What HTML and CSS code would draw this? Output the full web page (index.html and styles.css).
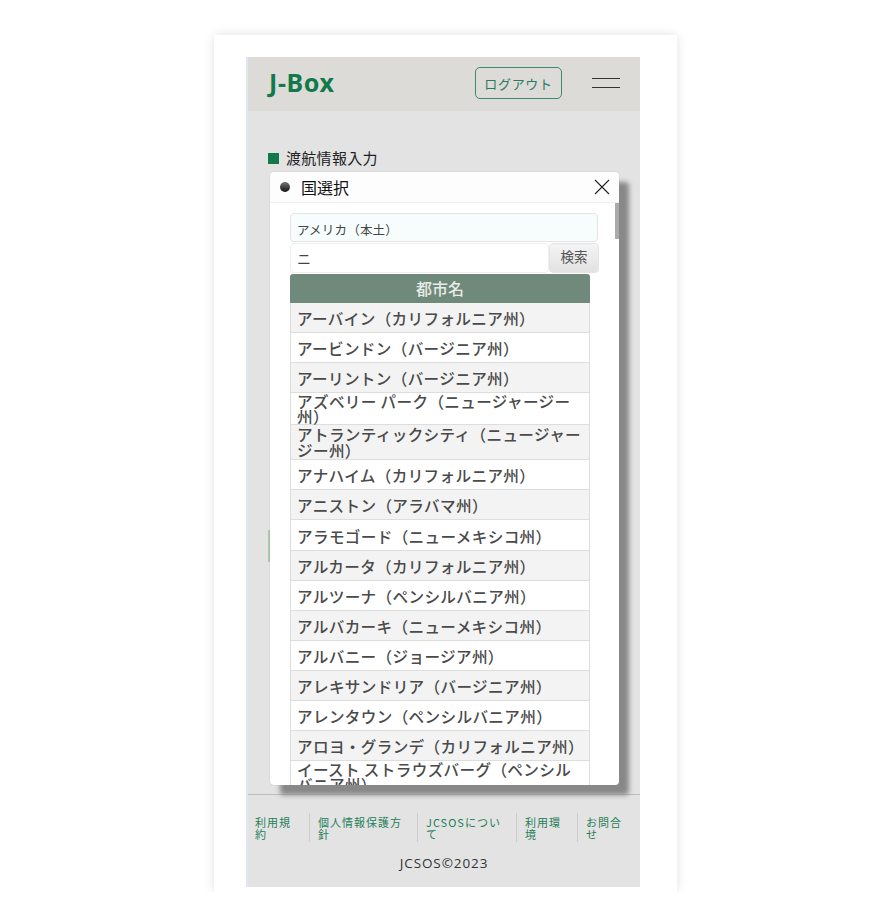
FILE: index.html
```html
<!DOCTYPE html>
<html lang="ja">
<head>
    <meta charset="UTF-8">
    <title>J-Box</title>
    <link rel="stylesheet" href="styles.css">
</head>
<body>

    <div class="sheet">
        <div class="phone">
            <!-- Header -->
            <header class="top-bar">
                <span class="logo">J-Box</span>
                <span class="logout-btn">ログアウト</span>
                <span class="menu-icon"><i></i><i></i></span>
            </header>

            <!-- Page behind the modal -->
            <main class="content">
                <h2 class="section-title">渡航情報入力</h2>
                <div class="hidden-field"></div>
            </main>

            <!-- Footer -->
            <footer class="site-footer">
                <nav class="footer-links">
                    <a class="link-1">利用規約</a>
                    <a class="link-2">個人情報保護方針</a>
                    <a class="link-3">JCSOSについて</a>
                    <a class="link-4">利用環境</a>
                    <a class="link-5">お問合せ</a>
                </nav>
                <p class="copyright">JCSOS©2023</p>
            </footer>

            <!-- Country select modal -->
            <div class="modal">
                <div class="modal-head">
                    <span class="modal-dot"></span>
                    <span class="modal-title">国選択</span>
                    <svg class="modal-close" width="18" height="18" viewBox="0 0 18 18">
                        <path d="M2 2 L16 16 M16 2 L2 16" stroke="#222" stroke-width="1.1" fill="none"/>
                    </svg>
                </div>
                <div class="modal-body">
                    <div class="scroll-thumb"></div>
                    <div class="country-box">アメリカ（本土）</div>
                    <div class="search-row">
                        <div class="search-input">ニ</div>
                        <div class="search-btn">検索</div>
                    </div>
                    <div class="city-table">
                        <div class="city-head">都市名</div>
                        <div class="city-row">アーバイン（カリフォルニア州）</div>
                        <div class="city-row">アービンドン（バージニア州）</div>
                        <div class="city-row">アーリントン（バージニア州）</div>
                        <div class="city-row wrap">アズベリー パーク（ニュージャージー州）</div>
                        <div class="city-row wrap tall">アトランティックシティ（ニュージャージー州）</div>
                        <div class="city-row">アナハイム（カリフォルニア州）</div>
                        <div class="city-row">アニストン（アラバマ州）</div>
                        <div class="city-row">アラモゴード（ニューメキシコ州）</div>
                        <div class="city-row">アルカータ（カリフォルニア州）</div>
                        <div class="city-row">アルツーナ（ペンシルバニア州）</div>
                        <div class="city-row">アルバカーキ（ニューメキシコ州）</div>
                        <div class="city-row">アルバニー（ジョージア州）</div>
                        <div class="city-row">アレキサンドリア（バージニア州）</div>
                        <div class="city-row">アレンタウン（ペンシルバニア州）</div>
                        <div class="city-row">アロヨ・グランデ（カリフォルニア州）</div>
                        <div class="city-row wrap">イースト ストラウズバーグ（ペンシルバニア州）</div>
                    </div>
                </div>
            </div>
        </div>
    </div>

</body>
</html>
```

FILE: styles.css
```css
body {
    font-family: "Noto Sans CJK JP", "Noto Sans", sans-serif;
    margin: 0;
    padding: 0;
    background-color: #fff;
}

.sheet {
    width: 431px;
    height: 835px;
    margin: 35px 0 0 214px;
    padding: 22px 0 0 32px;
    background: #fff;
    box-shadow: 0 0 10px rgba(0, 0, 0, 0.12);
}

.phone {
    position: relative;
    width: 392px;
    height: 830px;
    display: flex;
    flex-direction: column;
    background: #e3e3e3;
    border-left: 2px solid #e2e6f2;
}

/* Header */
.top-bar {
    height: 54px;
    box-sizing: border-box;
    display: flex;
    align-items: center;
    padding: 0 20px 2px 21px;
    background: #dcdbd8;
}

.logo {
    font-family: "Noto Sans", sans-serif;
    font-size: 25px;
    font-weight: 700;
    letter-spacing: 0.6px;
    padding-bottom: 3px;
    color: #12794a;
    margin-right: auto;
}

.logout-btn {
    width: 85px;
    height: 30px;
    display: flex;
    align-items: center;
    justify-content: center;
    border: 1px solid #3c8b70;
    border-radius: 5px;
    font-size: 13px;
    letter-spacing: 0.7px;
    color: #2b7a5e;
}

.menu-icon {
    margin-left: 30px;
    display: flex;
    flex-direction: column;
    gap: 8px;
}

.menu-icon i {
    display: block;
    width: 28px;
    height: 1px;
    background: #333;
}

/* Content behind modal */
.content {
    flex: 1;
    padding: 37px 0 0 20px;
}

.section-title {
    margin: 0;
    display: flex;
    align-items: center;
    font-size: 15px;
    font-weight: 400;
    line-height: 20px;
    letter-spacing: 0.3px;
    color: #222;
}

.section-title::before {
    content: "";
    width: 11px;
    height: 11px;
    margin-right: 7px;
    background: #12794a;
}

.hidden-field {
    width: 3px;
    height: 32px;
    margin-top: 362px;
    background: #a9c9a8;
}

/* Footer */
.site-footer {
    height: 93px;
    border-top: 1px solid #bbb;
    box-sizing: border-box;
}

.footer-links {
    display: flex;
    gap: 8px;
    margin-top: 18px;
    padding-left: 7px;
}

.footer-links a {
    flex: none;
    height: 29px;
    box-sizing: border-box;
    padding-top: 3px;
    font-size: 11px;
    line-height: 12px;
    letter-spacing: 1px;
    color: #1e8058;
    border-right: 1px solid #ccc;
}

.footer-links .link-1 { width: 55px; padding-right: 15px; }
.footer-links .link-2 { width: 100px; padding-right: 12px; }
.footer-links .link-3 { width: 91px; padding-right: 12px; }
.footer-links .link-4 { width: 53px; padding-right: 13px; }
.footer-links .link-5 { width: 44px; border-right: none; }

.copyright {
    margin: 12px 0 0;
    text-align: center;
    font-family: "Open Sans", sans-serif;
    font-size: 13.5px;
    letter-spacing: 0.9px;
    color: #333;
}

/* Modal */
.modal {
    position: absolute;
    left: 22px;
    top: 115px;
    width: 349px;
    height: 613px;
    background: #fff;
    border-radius: 4px;
    overflow: hidden;
    box-shadow: 10px 10px 5px #888, 0 0 1px rgba(0, 0, 0, 0.3);
}

.modal-head {
    height: 31px;
    display: flex;
    align-items: center;
    padding: 0 8px 0 10px;
    background: #fdfdfd;
    border-bottom: 1px solid #eee;
    box-sizing: border-box;
}

.modal-dot {
    width: 10px;
    height: 10px;
    border-radius: 50%;
    background: linear-gradient(#777, #111);
    margin-right: 11px;
}

.modal-title {
    font-size: 16px;
    color: #111;
    margin-right: auto;
}

.modal-body {
    position: relative;
    padding: 10px 20px 0;
}

.scroll-thumb {
    position: absolute;
    right: 0;
    top: 0;
    width: 4px;
    height: 36px;
    background: #aaa;
}

.country-box {
    width: 308px;
    height: 29px;
    box-sizing: border-box;
    padding: 3px 6px 0;
    display: flex;
    align-items: center;
    font-size: 12.5px;
    letter-spacing: 0.2px;
    color: #444;
    background: #f7fdfd;
    border: 1px solid #e4e4e4;
    border-radius: 4px;
}

.search-row {
    display: flex;
    height: 30px;
    margin-top: 1px;
    width: 309px;
}

.search-input {
    flex: 1;
    display: flex;
    align-items: center;
    padding: 0 6px;
    font-size: 14px;
    color: #444;
    border: 1px solid #eee;
    border-radius: 4px;
}

.search-btn {
    width: 50px;
    box-sizing: border-box;
    padding-bottom: 4px;
    display: flex;
    align-items: center;
    justify-content: center;
    font-size: 13.5px;
    color: #555;
    background: linear-gradient(#f4f4f4, #e2e2e2);
    border-radius: 4px;
    border: 1px solid #e4e4e4;
}

.city-table {
    width: 300px;
    margin-top: 1px;
}

.city-head {
    height: 29px;
    line-height: 28px;
    text-align: center;
    font-size: 16px;
    font-weight: 500;
    color: #e6ece8;
    background: #6f8a7a;
    border-radius: 3px 3px 0 0;
}

.city-row {
    height: 30.1px;
    box-sizing: border-box;
    padding: 1px 2px 0 6px;
    display: flex;
    align-items: center;
    font-size: 15.6px;
    font-weight: 500;
    line-height: 16px;
    letter-spacing: 0.35px;
    color: #4a4a4a;
    background: #fff;
    border: 1px solid #ddd;
    border-top: none;
}

.city-row:nth-child(even) {
    background: #f3f3f3;
}

.city-row.wrap {
    height: 32px;
    padding-top: 0;
    line-height: 15px;
}

.city-row.tall {
    height: 35px;
    line-height: 16px;
}
```
